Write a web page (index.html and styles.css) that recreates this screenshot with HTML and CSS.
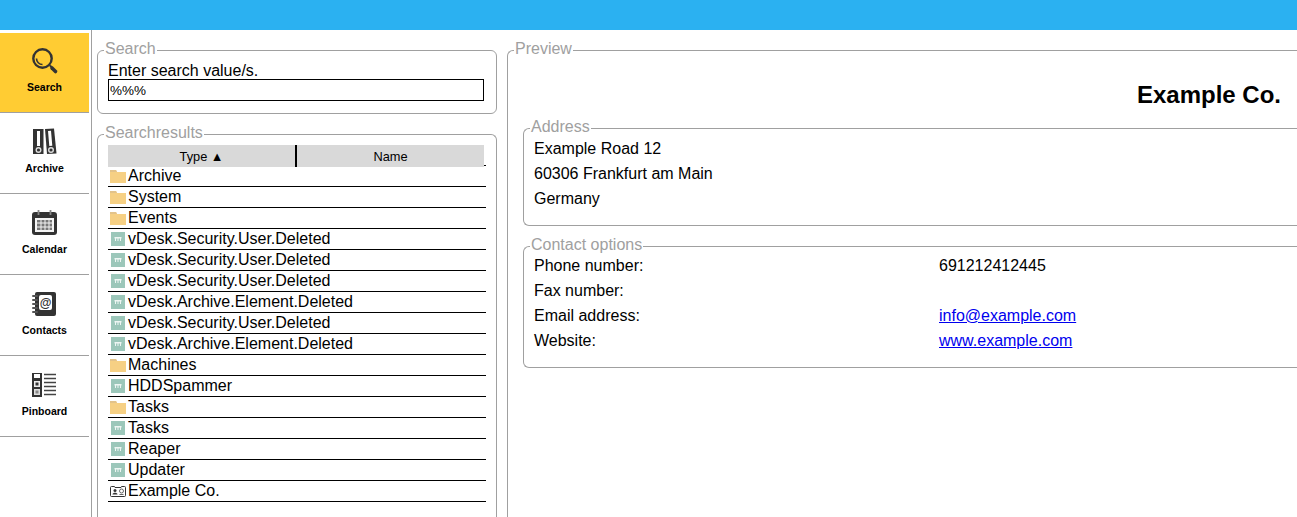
FILE: index.html
```html
<!DOCTYPE html>
<html lang="en">
<head>
  <meta charset="UTF-8">
  <title>Search</title>
  <link rel="stylesheet" href="styles.css">
</head>
<body>
  <svg class="defs" width="0" height="0">
    <symbol id="folder" viewBox="0 0 16 16">
      <path d="M0 2h6l1 2h9v11H0z" fill="#f6d084"/>
      <path d="M0 2h6l1 2H0z" fill="#e3c38a"/>
    </symbol>
    <symbol id="task" viewBox="0 0 16 16">
      <rect x="1" y="1" width="14" height="14" fill="#9cc7ba"/>
      <path d="M4.500 6h7v1.500h-7zM5 7h1v3H5zM7.500 7h1v3h-1zM10 7h1v3h-1z" fill="#eef6f3"/>
    </symbol>
    <symbol id="contact" viewBox="0 0 16 16">
      <path d="M1.500 3.500h3l.5 1h6l.5-1h3a1 1 0 0 1 1 1v8a1 1 0 0 1-1 1h-13a1 1 0 0 1-1-1v-8a1 1 0 0 1 1-1z" fill="#fff" stroke="#333"/>
      <circle cx="5" cy="7.500" r="1.500" fill="#333"/>
      <path d="M2.500 11.500c0-2.500 5-2.500 5 0z" fill="#333"/>
      <circle cx="11.500" cy="8" r="2" fill="none" stroke="#666"/>
      <path d="M9.500 11.500h4" stroke="#666"/>
    </symbol>
  </svg>

  <div class="topbar"></div>
  <div class="page">
    <nav class="sidebar">
      <a class="nav-item active">
        <svg viewBox="0 0 29 28">
          <circle cx="12.500" cy="10.500" r="9.200" fill="none" stroke="#333" stroke-width="2.400"/>
          <path d="M6.500 10.500a6 6 0 0 0 6 6" fill="none" stroke="#333" stroke-width="1.600"/>
          <path d="M20 17.500l1.500 1.500" stroke="#333" stroke-width="1.800"/>
          <path d="M22 20l3.500 3.500" stroke="#333" stroke-width="3.600" stroke-linecap="round"/>
        </svg>
        <span>Search</span>
      </a>
      <a class="nav-item">
        <svg viewBox="0 0 29 28">
          <path d="M3 1h10.500v25H3z" fill="#333"/>
          <path d="M15 1l9-.5 2.500 25-9.500 .5z" fill="#333"/>
          <path d="M7 3h3v15H7zM18 3l3-.2 1.300 15-3 .2z" fill="#fff"/>
          <circle cx="8.500" cy="22" r="2.300" fill="none" stroke="#ddd" stroke-width="1.400"/>
          <circle cx="21" cy="22" r="2.300" fill="none" stroke="#ddd" stroke-width="1.400"/>
        </svg>
        <span>Archive</span>
      </a>
      <a class="nav-item">
        <svg viewBox="0 0 29 28">
          <rect x="2" y="3" width="25" height="23" rx="3" fill="#333"/>
          <rect x="5" y="9" width="19" height="14" fill="#f4f4f4"/>
          <path d="M8.500 1v5M20.500 1v5" stroke="#888" stroke-width="1.800"/>
          <path d="M7 11h15v10H7z" fill="#777"/>
          <path d="M7 14h15M7 18h15M11 11v10M15 11v10M19 11v10" stroke="#f4f4f4"/>
        </svg>
        <span>Calendar</span>
      </a>
      <a class="nav-item">
        <svg viewBox="0 0 29 28">
          <rect x="5" y="2" width="21" height="24" rx="2" fill="#333"/>
          <rect x="9" y="5" width="13" height="15" rx="2" fill="#fff"/>
          <text class="at" x="15.500" y="16.500">@</text>
          <path d="M3 6h4M3 10h4M3 14h4M3 18h4M3 22h4" stroke="#555" stroke-width="2" stroke-linecap="round"/>
        </svg>
        <span>Contacts</span>
      </a>
      <a class="nav-item">
        <svg viewBox="0 0 29 28">
          <rect x="2" y="2" width="10" height="24" fill="#333"/>
          <rect x="4" y="3" width="6" height="4" fill="#fff"/>
          <rect x="4" y="10" width="6" height="6" fill="#eee"/>
          <rect x="5.500" y="11.500" width="3" height="3" fill="#333"/>
          <rect x="4" y="18" width="6" height="6" fill="#ddd"/>
          <rect x="5.500" y="19.500" width="3" height="3" fill="#888"/>
          <path d="M14 3.500h12M14 7.500h12M14 11.500h12M14 15.500h12M14 19.500h12M14 23.500h12" stroke="#444" stroke-width="1.500"/>
        </svg>
        <span>Pinboard</span>
      </a>
    </nav>

    <section class="left">
      <fieldset class="box search-box">
        <legend>Search</legend>
        <label for="q">Enter search value/s.</label>
        <input id="q" type="text" value="%%%">
      </fieldset>

      <fieldset class="box results">
        <legend>Searchresults</legend>
        <div class="results-head">
          <div class="col type">Type ▲</div>
          <div class="col">Name</div>
          <div class="head-end"></div>
        </div>
        <ul class="rows">
          <li><svg><use href="#folder"/></svg>Archive</li>
          <li><svg><use href="#folder"/></svg>System</li>
          <li><svg><use href="#folder"/></svg>Events</li>
          <li><svg><use href="#task"/></svg>vDesk.Security.User.Deleted</li>
          <li><svg><use href="#task"/></svg>vDesk.Security.User.Deleted</li>
          <li><svg><use href="#task"/></svg>vDesk.Security.User.Deleted</li>
          <li><svg><use href="#task"/></svg>vDesk.Archive.Element.Deleted</li>
          <li><svg><use href="#task"/></svg>vDesk.Security.User.Deleted</li>
          <li><svg><use href="#task"/></svg>vDesk.Archive.Element.Deleted</li>
          <li><svg><use href="#folder"/></svg>Machines</li>
          <li><svg><use href="#task"/></svg>HDDSpammer</li>
          <li><svg><use href="#folder"/></svg>Tasks</li>
          <li><svg><use href="#task"/></svg>Tasks</li>
          <li><svg><use href="#task"/></svg>Reaper</li>
          <li><svg><use href="#task"/></svg>Updater</li>
          <li><svg><use href="#contact"/></svg>Example Co.</li>
        </ul>
      </fieldset>
    </section>

    <fieldset class="box preview">
      <legend>Preview</legend>
      <h1>Example Co.</h1>

      <fieldset class="box inner address">
        <legend>Address</legend>
        <div class="line">Example Road 12</div>
        <div class="line">60306 Frankfurt am Main</div>
        <div class="line">Germany</div>
      </fieldset>

      <fieldset class="box inner contact">
        <legend>Contact options</legend>
        <div class="opt"><span>Phone number:</span><span>691212412445</span></div>
        <div class="opt"><span>Fax number:</span><span></span></div>
        <div class="opt"><span>Email address:</span><a href="#">info@example.com</a></div>
        <div class="opt"><span>Website:</span><a href="#">www.example.com</a></div>
      </fieldset>
    </fieldset>
  </div>
</body>
</html>
```

FILE: styles.css
```css
html, body { margin: 0; padding: 0; height: 100%; overflow: hidden; }
body { font-family: "Liberation Sans", Arial, sans-serif; font-size: 16px; color: #000; background: #fff; }
.defs { position: absolute; }

.topbar { height: 30px; background-color: #2bb1f1; }
.page { display: flex; height: 487px; overflow: hidden; }

.sidebar { flex: none; box-sizing: border-box; width: 92px; padding: 3px 2px 0 0; border-right: 1px solid #a0a0a0; }
.nav-item { display: flex; flex-direction: column; align-items: center; box-sizing: border-box; height: 81px; padding-top: 15px; border-bottom: 1px solid #a0a0a0; font-size: 10.5px; line-height: 12px; font-weight: bold; }
.nav-item svg { display: block; flex: none; width: 29px; height: 28px; margin-bottom: 6px; }
.nav-item.active { height: 80px; background-color: #ffcc33; }
.nav-item.active svg { margin-bottom: 5px; }
.at { font-family: "Liberation Sans", sans-serif; font-size: 12px; font-weight: bold; text-anchor: middle; fill: #333; }

.box { margin: 0; padding: 0; min-width: 0; border: 1px solid #a0a0a0; border-radius: 6px; }
.box legend { margin-left: -4px; padding: 0 1px 3px; color: #a0a0a0; font-size: 16px; line-height: 18px; }

.left { flex: none; width: 400px; margin-left: 5px; padding-top: 10px; }
.search-box { box-sizing: border-box; height: 74px; padding: 1px 10px 0; }
.search-box label { display: block; line-height: 17px; }
.search-box input { display: block; box-sizing: border-box; width: 376px; height: 22px; margin: 0; padding: 0 1px; border: 1px solid #000; border-radius: 0; outline: none; font-family: inherit; font-size: 13.5px; }

.results { box-sizing: border-box; height: 500px; margin-top: 10px; padding: 0 10px; border-bottom: 0; border-radius: 6px 6px 0 0; }
.results-head { display: flex; width: 378px; height: 22px; font-size: 12.8px; line-height: 24px; text-align: center; }
.col { flex: 1; background-color: #d9d9d9; }
.col.type { flex: none; width: 187px; border-right: 2px solid #000; }
.head-end { flex: none; width: 2px; height: 20px; border-bottom: 1px solid #000; }
.rows { list-style: none; margin: 0; padding: 0; width: 378px; }
.rows li { display: flex; align-items: center; box-sizing: border-box; height: 21px; border-bottom: 1px solid #000; padding-left: 2px; line-height: 20px; white-space: nowrap; }
.rows li:first-child { height: 20px; padding-bottom: 1px; }
.rows svg { flex: none; width: 16px; height: 16px; margin-right: 2px; }

.preview { flex: 1; box-sizing: border-box; height: 500px; margin: 10px 0 0 10px; padding: 0 0 0 15px; border-right: 0; border-bottom: 0; border-radius: 6px 0 0 0; }
.box.preview > legend { margin-left: -9px; }
.preview h1 { box-sizing: border-box; height: 57px; margin: 0; padding: 20px 16px 0 0; font-size: 24px; line-height: 28px; text-align: right; }
.inner { box-sizing: border-box; padding: 0 0 0 10px; border-right: 0; border-radius: 6px 0 0 6px; }
.address { height: 108px; }
.contact { height: 132px; margin-top: 10px; }
.line { height: 25px; line-height: 25px; }
.address .line:first-of-type { margin-top: -3px; }
.opt { display: flex; height: 25px; line-height: 25px; }
.opt:first-of-type { margin-top: -4px; }
.opt > :first-child { flex: none; width: 405px; }
```
